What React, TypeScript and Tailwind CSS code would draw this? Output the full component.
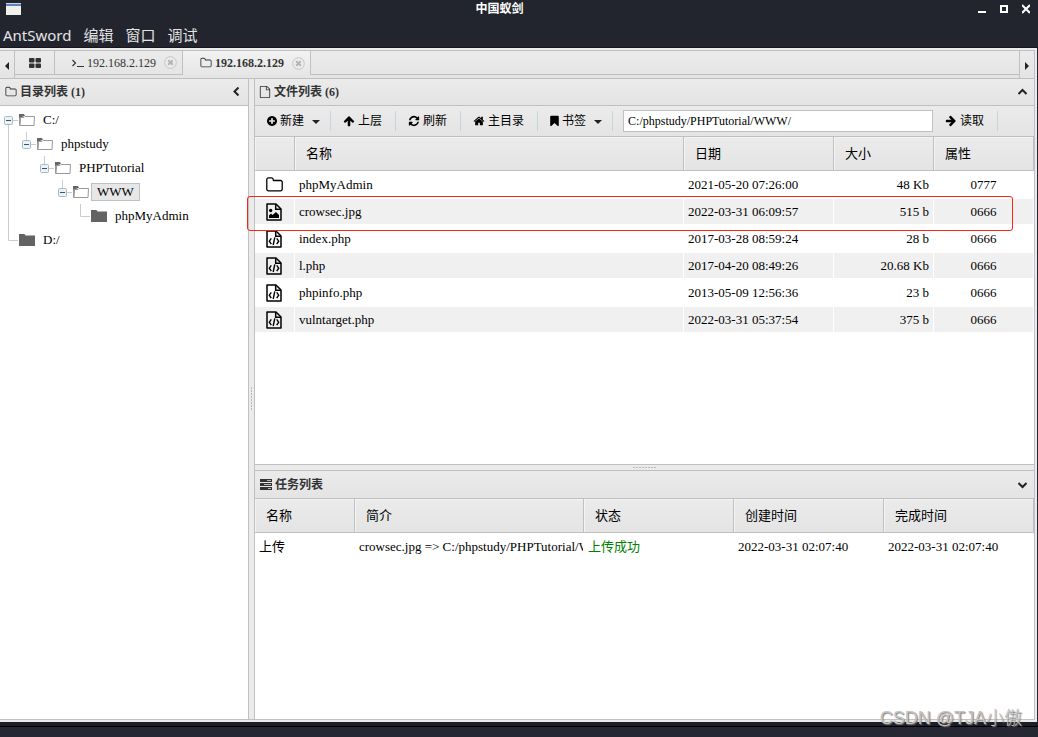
import { useState } from "react";
import type { ReactNode } from "react";
import clsx from "clsx";

const ICONS = {
    folder: "M1600 1312v-704q0-40-28-68t-68-28h-704q-40 0-68-28t-28-68v-64q0-40-28-68t-68-28h-320q-40 0-68 28t-28 68v960q0 40 28 68t68 28h1216q40 0 68-28t28-68zm128-704v704q0 92-66 158t-158 66h-1216q-92 0-158-66t-66-158v-960q0-92 66-158t158-66h320q92 0 158 66t66 158v32h672q92 0 158 66t66 158z",
    file: "M1596 380q28 28 48 76t20 88v1152q0 40-28 68t-68 28h-1344q-40 0-68-28t-28-68v-1600q0-40 28-68t68-28h896q40 0 88 20t76 48zm-444-244v376h376q-10-29-22-41l-313-313q-12-12-41-22zm384 1528v-1024h-416q-40 0-68-28t-28-68v-416h-768v1536h1280z",
    plus: "M1344 960v-128q0-26-19-45t-45-19h-256v-256q0-26-19-45t-45-19h-128q-26 0-45 19t-19 45v256h-256q-26 0-45 19t-19 45v128q0 26 19 45t45 19h256v256q0 26 19 45t45 19h128q26 0 45-19t19-45v-256h256q26 0 45-19t19-45zm320-64q0 209-103 385.5t-279.5 279.5-385.5 103-385.5-103-279.5-279.5-103-385.5 103-385.5 279.5-279.5 385.5-103 385.5 103 279.5 279.5 103 385.5z",
    up: "M1675 971q0 51-37 90l-75 75q-38 38-91 38-54 0-90-38l-294-293v704q0 52-37.5 84.5t-90.5 32.5h-128q-53 0-90.5-32.5t-37.5-84.5v-704l-294 293q-36 38-90 38t-90-38l-75-75q-38-38-38-90 0-53 38-91l651-651q35-37 90-37 54 0 91 37l651 651q37 39 37 91z",
    refresh: "M1639 1056q0 5-1 7-64 268-268 434.5t-478 166.5q-146 0-282.5-55t-243.5-157l-129 129q-19 19-45 19t-45-19-19-45v-448q0-26 19-45t45-19h448q26 0 45 19t19 45-19 45l-137 137q71 66 161 102t187 36q134 0 250-65t186-179q11-17 53-117 8-23 30-23h192q13 0 22.5 9.5t9.5 22.5zm25-800v448q0 26-19 45t-45 19h-448q-26 0-45-19t-19-45 19-45l138-138q-148-137-349-137-134 0-250 65t-186 179q-11 17-53 117-8 23-30 23h-199q-13 0-22.5-9.5t-9.5-22.5v-7q65-268 270-434.5t480-166.5q146 0 284 55.5t245 156.5l130-129q19-19 45-19t45 19 19 45z",
    home: "M1472 992v480q0 26-19 45t-45 19h-384v-384h-256v384h-384q-26 0-45-19t-19-45v-480q0-1 .5-3t.5-3l575-474 575 474q1 2 1 6zm223-69l-62 74q-8 9-21 11h-3q-13 0-21-7l-692-577-692 577q-12 8-24 7-13-2-21-11l-62-74q-8-10-7-23.5t11-21.5l719-599q32-26 76-26t76 26l244 204v-195q0-14 9-23t23-9h192q14 0 23 9t9 23v408l219 182q10 8 11 21.5t-7 23.5z",
    bookmark: "M1420 128q23 0 44 9 33 13 52.5 41t19.5 62v1289q0 34-19.5 62t-52.5 41q-19 8-44 8-48 0-83-32l-441-424-441 424q-36 33-83 33-23 0-44-9-33-13-52.5-41t-19.5-62v-1289q0-34 19.5-62t52.5-41q21-9 44-9h1048z",
};

const Icon = ({ name, box = "0 0 1792 1792", className = "h-3 w-3" }: { name: keyof typeof ICONS; box?: string; className?: string }) => (
    <svg viewBox={box} fill="currentColor" className={clsx("shrink-0", className)}><path d={ICONS[name]} /></svg>
);

const Caret = () => (
    <svg viewBox="0 0 8 4" className="mt-0.5 ml-2 h-1 w-2 shrink-0"><path d="M0 0h8l-4 4z" fill="#222" /></svg>
);

const CloseIcon = () => (
    <svg viewBox="0 0 13 13" className="h-[13px] w-[13px]" fill="none">
        <circle cx="6.5" cy="6.5" r="5.8" fill="#ececec" stroke="#c4c4c4" />
        <path d="M4.2 4.2l4.6 4.6M8.8 4.2l-4.6 4.6" stroke="#b4b4b4" strokeWidth="2" />
    </svg>
);

const Chevron = ({ d }: { d: string }) => (
    <svg viewBox="0 0 9 9" className="h-[9px] w-[9px]" fill="none" stroke="#222" strokeWidth="2"><path d={d} /></svg>
);

/* file type icons in the grid */
const TypeIcon = ({ type }: { type: string }) => {
    if (type == "folder") return <Icon name="folder" box="64 0 1664 1792" className="ml-[7px] h-[18px] w-[17px]" />;
    return (
        <svg viewBox="0 0 16 18" className="ml-[7px] h-[18px] w-4" fill="none" stroke="#000" strokeWidth="1.5">
            <path d="M1 1h9l5 5v11H1z" strokeLinejoin="round" />
            <path d="M9.7 1v5.2H15" />
            {type == "image" ? (
                <path d="M3 15v-2.500l2-2 1.500 1.500 3.500-3 3 3v3zM3 7.500a1.700 1.700 0 1 0 3.400 0 1.700 1.700 0 1 0-3.400 0z" fill="#000" stroke="none" />
            ) : (
                <path d="M5.300 8.300l-2 2.900 2 2.900M10.700 8.300l2 2.900-2 2.900M8.800 7.300l-1.600 7.700" strokeWidth="1.400" />
            )}
        </svg>
    );
};

const PANEL_HEAD = "flex items-center border-b border-[#c0c0c0] bg-linear-to-b from-[#ebebeb] to-[#e4e4e4] text-xs font-bold text-[#333]";

const Tab = ({ active, icon, onClick }: { active: boolean; icon: ReactNode; onClick: () => void }) => (
    <div className={clsx("flex w-32 items-center justify-end border-r border-[#c0c0c0] pr-[5px]", active ? "bg-linear-to-b from-[#f2f2f2] to-[#e6e6e6]" : "border-b")}>
        <button className={clsx("mr-2 flex items-center gap-[3px]", active && "font-bold")} onClick={onClick}>
            {icon}
            192.168.2.129
        </button>
        <button aria-label="关闭"><CloseIcon /></button>
    </div>
);

/* one 18px wide column of the tree guide lines */
const Guide = ({ kind }: { kind: string }) => (
    <svg viewBox="0 0 18 24" className="h-6 w-[18px] shrink-0" fill="none" stroke="#ccc">
        {kind == "line" && <path d="M8.500 0v24" />}
        {kind == "end" && <path d="M8.500 0v12.500h9.500" />}
        {(kind == "root" || kind == "minus") && (
            <>
                <path d={kind == "root" ? "M13 12.500h5M8.500 17v7" : "M13 12.500h5M8.500 0v8"} />
                <rect x="4.500" y="8.500" width="8" height="8" rx="1" fill="#e9f3f7" stroke="#a9bac4" />
                <path d="M6 12.500h5" stroke="#31566b" />
            </>
        )}
    </svg>
);

const TreeFolder = ({ open }: { open: boolean }) => (
    <svg viewBox="0 0 18 24" className="h-6 w-[18px] shrink-0">
        {open ? (
            <>
                <path d="M1 6h5l1 2h2v2H3v3H1z" fill="#666" />
                <path d="M2.500 9.500l4-1.500h10v9.500h-14z" fill="#fff" stroke="none" />
                <path d="M1.500 9.500v8h14.500l.5-9h-9.500l-1 1H2.500l-.5 8" fill="none" stroke="#999" />
            </>
        ) : (
            <path d="M1 6h5.500l1 1.500H17V18H1z" fill="#636363" />
        )}
    </svg>
);

const TREE = [
    { name: "C:/",         guides: ["root"],                            open: true },
    { name: "phpstudy",    guides: ["line", "minus"],                   open: true },
    { name: "PHPTutorial", guides: ["line", "", "minus"],               open: true },
    { name: "WWW",         guides: ["line", "", "", "minus"],           open: true },
    { name: "phpMyAdmin",  guides: ["line", "", "", "", "end"],         open: false },
    { name: "D:/",         guides: ["end"],                             open: false },
];

const FILES = [
    { type: "folder", name: "phpMyAdmin",     date: "2021-05-20 07:26:00", size: "48 Kb",    mode: "0777" },
    { type: "image",  name: "crowsec.jpg",    date: "2022-03-31 06:09:57", size: "515 b",    mode: "0666", marked: true },
    { type: "code",   name: "index.php",      date: "2017-03-28 08:59:24", size: "28 b",     mode: "0666" },
    { type: "code",   name: "l.php",          date: "2017-04-20 08:49:26", size: "20.68 Kb", mode: "0666" },
    { type: "code",   name: "phpinfo.php",    date: "2013-05-09 12:56:36", size: "23 b",     mode: "0666" },
    { type: "code",   name: "vulntarget.php", date: "2022-03-31 05:37:54", size: "375 b",    mode: "0666" },
];

const TH = "h-[34px] border-r border-b border-[#c0c0c0] pl-[11px] text-left font-normal shadow-[inset_1px_1px_0_#f4f4f4]";
const TD = "h-[27px] overflow-hidden border-y border-r border-white px-1 py-0 whitespace-nowrap";
const GRID = "w-full table-fixed border-separate border-spacing-0 text-[13px] leading-5 text-black";

const ToolButton = ({ icon, label, menu }: { icon: ReactNode; label: string; menu?: boolean }) => (
    <button className={clsx("flex h-5 shrink-0 items-center border-r border-[#c3d6de] pl-3", menu ? "pr-2.5" : "pr-[13px]")}>
        {icon}
        <span className="ml-[3px]">{label}</span>
        {menu && <Caret />}
    </button>
);

export default function App() {
    const [ tab, setTab ] = useState(1);
    const [ selected, setSelected ] = useState("WWW");
    const [ path, setPath ] = useState("C:/phpstudy/PHPTutorial/WWW/");

    return (
        <div className="relative flex h-screen flex-col overflow-hidden bg-[#23252e] font-['Liberation_Serif','Noto_Sans_CJK_SC',serif]">
            <header className="border-b border-[#1c141d] font-['Noto_Sans','Noto_Sans_CJK_SC',sans-serif] text-white">
                <div className="flex h-5 items-start pr-2 pl-1.5">
                    <svg viewBox="0 0 15 12" className="mt-[3px] h-3 w-[15px]">
                        <rect width="15" height="12" fill="#f1f1ec" />
                        <rect width="15" height="3" fill="#5d83b8" />
                        <rect width="15" height="1" fill="#c7d5e6" />
                    </svg>
                    <h1 className="flex-1 text-center text-xs leading-[18px] font-bold">中国蚁剑</h1>
                    <div className="mt-1 flex gap-3.5">
                        {["M0 8h8", "M1 2h6v6H1z", "M0 1l8 8M8 1L0 9"].map((d, i) => (
                            <button key={d} aria-label={["最小化", "最大化", "关闭"][i]}>
                                <svg viewBox="0 0 8 10" className="h-2.5 w-2" fill="none" stroke="#fff" strokeWidth="2"><path d={d} /></svg>
                            </button>
                        ))}
                    </div>
                </div>
                <nav className="flex h-[27px] items-center gap-3 pt-0.5 pl-[3px] text-[15px] leading-5 text-[#e4e4e4]">
                    <button>AntSword</button>
                    <button>编辑</button>
                    <button>窗口</button>
                    <button>调试</button>
                </nav>
            </header>

            <div className="mr-px flex min-h-0 flex-1 flex-col bg-[#ebebeb] py-0.5 pr-0.5">
                <div className="flex h-[29px] shrink-0 border border-l-0 border-[#c0c0c0] bg-linear-to-b from-[#ebebeb] to-[#e4e4e4] text-xs text-[#333]">
                    <button className="flex w-[15px] items-center justify-center border-r border-[#c0c0c0] pt-0.5" aria-label="向左">
                        <svg viewBox="0 0 4 8" className="h-2 w-1"><path d="M4 0v8L0 4z" fill="#222" /></svg>
                    </button>
                    <div className="mb-[3px] flex flex-1">
                        <button className="flex w-10 items-center justify-center border-r border-b border-[#c0c0c0]" aria-label="首页" onClick={() => setTab(-1)}>
                            <svg viewBox="0 0 12 10" className="h-2.5 w-3" fill="#333">
                                <rect width="5.500" height="4.500" rx="1" /><rect x="6.500" width="5.500" height="4.500" rx="1" />
                                <rect y="5.500" width="5.500" height="4.500" rx="1" /><rect x="6.500" y="5.500" width="5.500" height="4.500" rx="1" />
                            </svg>
                        </button>
                        <Tab active={tab == 0} onClick={() => setTab(0)} icon={
                            <svg viewBox="0 0 12 12" className="h-3 w-3" fill="none" stroke="#333" strokeWidth="1.200"><path d="M.5 3l3 3-3 3M5 9.500h7" /></svg>
                        } />
                        <Tab active={tab == 1} onClick={() => setTab(1)} icon={<Icon name="folder" />} />
                        <div className="flex-1 border-b border-[#c0c0c0]" />
                    </div>
                    <button className="flex w-[15px] items-center justify-center border-l border-[#c0c0c0] pt-0.5" aria-label="向右">
                        <svg viewBox="0 0 4 8" className="h-2 w-1"><path d="M0 0v8l4-4z" fill="#222" /></svg>
                    </button>
                </div>

                <main className="flex min-h-0 flex-1 border-r border-b border-[#c0c0c0]">
                    <aside className="flex w-[248px] shrink-0 flex-col bg-white">
                        <div className={clsx(PANEL_HEAD, "h-[27px] pr-[7px] pb-px pl-[5px]")}>
                            <Icon name="folder" />
                            <h2 className="ml-[3px] flex-1">目录列表 (1)</h2>
                            <button aria-label="折叠"><Chevron d="M6.500 .5l-4 4 4 4" /></button>
                        </div>
                        <ul className="pt-0.5 text-[13px] leading-4 text-black">
                            {TREE.map((node) => (
                                <li key={node.name} className="flex h-6 items-center">
                                    {node.guides.map((kind, i) => <Guide key={i} kind={kind} />)}
                                    <TreeFolder open={node.open} />
                                    <button
                                        className={clsx("ml-px border px-[5px]", selected == node.name ? "border-[#c0c0c0] bg-[#e7e7e7]" : "border-transparent")}
                                        onClick={() => setSelected(node.name)}
                                    >
                                        {node.name}
                                    </button>
                                </li>
                            ))}
                        </ul>
                    </aside>

                    <div className="flex w-[7px] shrink-0 items-center justify-center border-x border-[#c0c0c0]">
                        <div className="h-6 w-px bg-[repeating-linear-gradient(to_bottom,#bbb_0_2px,transparent_2px_3px)]" />
                    </div>

                    <div className="grid min-w-0 flex-1 grid-rows-[385fr_7px_248fr]">
                        <section className="flex min-h-0 flex-col bg-white">
                            <div className={clsx(PANEL_HEAD, "h-[27px] shrink-0 pr-[7px] pb-px pl-1")}>
                                <Icon name="file" />
                                <h2 className="ml-[3px] flex-1">文件列表 (6)</h2>
                                <button aria-label="折叠"><Chevron d="M.5 7l4-4 4 4" /></button>
                            </div>
                            <div className="flex h-[31px] shrink-0 items-center border-b border-[#c0c0c0] bg-linear-to-b from-[#ebebeb] to-[#e4e4e4] text-xs text-black">
                                <ToolButton icon={<Icon name="plus" box="128 128 1536 1536" className="h-2.5 w-2.5" />} label="新建" menu />
                                <ToolButton icon={<Icon name="up" />} label="上层" />
                                <ToolButton icon={<Icon name="refresh" />} label="刷新" />
                                <ToolButton icon={<Icon name="home" />} label="主目录" />
                                <ToolButton icon={<Icon name="bookmark" box="224 0 1344 1792" className="h-3 w-[9px]" />} label="书签" menu />
                                <input
                                    className="ml-2.5 h-[22px] w-[310px] border border-[#c0c0c0] bg-white px-1 text-xs"
                                    aria-label="路径"
                                    value={path}
                                    onChange={(e) => setPath(e.target.value)}
                                />
                                <ToolButton icon={<Icon name="up" className="h-3 w-3 rotate-90" />} label="读取" />
                            </div>
                            <table className={GRID}>
                                <colgroup>
                                    <col className="w-10" /><col /><col className="w-[150px]" /><col className="w-[100px]" /><col className="w-[100px]" />
                                </colgroup>
                                <thead className="bg-linear-to-b from-[#ebebeb] to-[#e4e4e4]">
                                    <tr>
                                        {["", "名称", "日期", "大小", "属性"].map((h) => <th key={h} className={TH}>{h}</th>)}
                                    </tr>
                                </thead>
                                <tbody>
                                    {FILES.map((f, i) => (
                                        <tr key={f.name} className={clsx("relative", i % 2 == 1 && "bg-[#f0f0f0]")}>
                                            <td className={TD}>
                                                <TypeIcon type={f.type} />
                                                {f.marked && <span className="pointer-events-none absolute -top-0.5 right-[21px] -bottom-1.5 -left-2 z-10 rounded-[3px] border border-[#fb2418]" />}
                                            </td>
                                            <td className={TD}>{f.name}</td>
                                            <td className={TD}>{f.date}</td>
                                            <td className={clsx(TD, "text-right")}>{f.size}</td>
                                            <td className={clsx(TD, "text-center")}>{f.mode}</td>
                                        </tr>
                                    ))}
                                </tbody>
                            </table>
                        </section>

                        <div className="flex items-center justify-center border-y border-[#c0c0c0]">
                            <div className="h-px w-6 bg-[repeating-linear-gradient(to_right,#bbb_0_2px,transparent_2px_3px)]" />
                        </div>

                        <section className="min-h-0 overflow-hidden bg-white">
                            <div className={clsx(PANEL_HEAD, "h-7 pr-[7px] pl-[5px]")}>
                                <svg viewBox="0 0 12 11" className="h-[11px] w-3" fill="#333">
                                    <path d="M0 0h12v3H0zM0 4h12v3H0zM0 8h12v3H0z" />
                                    <path d="M7 1h4v1H7zM4 5h7v1H4zM8 9h3v1H8z" fill="#bbb" />
                                </svg>
                                <h2 className="ml-[3px] flex-1">任务列表</h2>
                                <button aria-label="展开"><Chevron d="M.5 3l4 4 4-4" /></button>
                            </div>
                            <table className={GRID}>
                                <colgroup>
                                    <col className="w-[100px]" /><col /><col className="w-[150px]" /><col className="w-[150px]" /><col className="w-[150px]" />
                                </colgroup>
                                <thead className="bg-linear-to-b from-[#ebebeb] to-[#e4e4e4]">
                                    <tr>
                                        {["名称", "简介", "状态", "创建时间", "完成时间"].map((h) => <th key={h} className={TH}>{h}</th>)}
                                    </tr>
                                </thead>
                                <tbody>
                                    <tr>
                                        <td className={TD}>上传</td>
                                        <td className={clsx(TD, "pr-0")}>crowsec.jpg =&gt; C:/phpstudy/PHPTutorial/WWW/</td>
                                        <td className={clsx(TD, "text-[#008000]")}>上传成功</td>
                                        <td className={TD}>2022-03-31 02:07:40</td>
                                        <td className={TD}>2022-03-31 02:07:40</td>
                                    </tr>
                                </tbody>
                            </table>
                        </section>
                    </div>
                </main>
            </div>

            <footer className="h-[15px] shrink-0 bg-[#1d1f28] pt-1">
                <div className="h-full border-t border-black bg-[#252833]" />
            </footer>
            <p className="absolute right-4 bottom-[7px] font-['Liberation_Sans','Noto_Sans_CJK_SC',sans-serif] text-lg leading-6 font-light text-[#c4c4c4] [text-shadow:1px_1px_1px_#777]">CSDN @TJA小傲</p>
        </div>
    );
}
